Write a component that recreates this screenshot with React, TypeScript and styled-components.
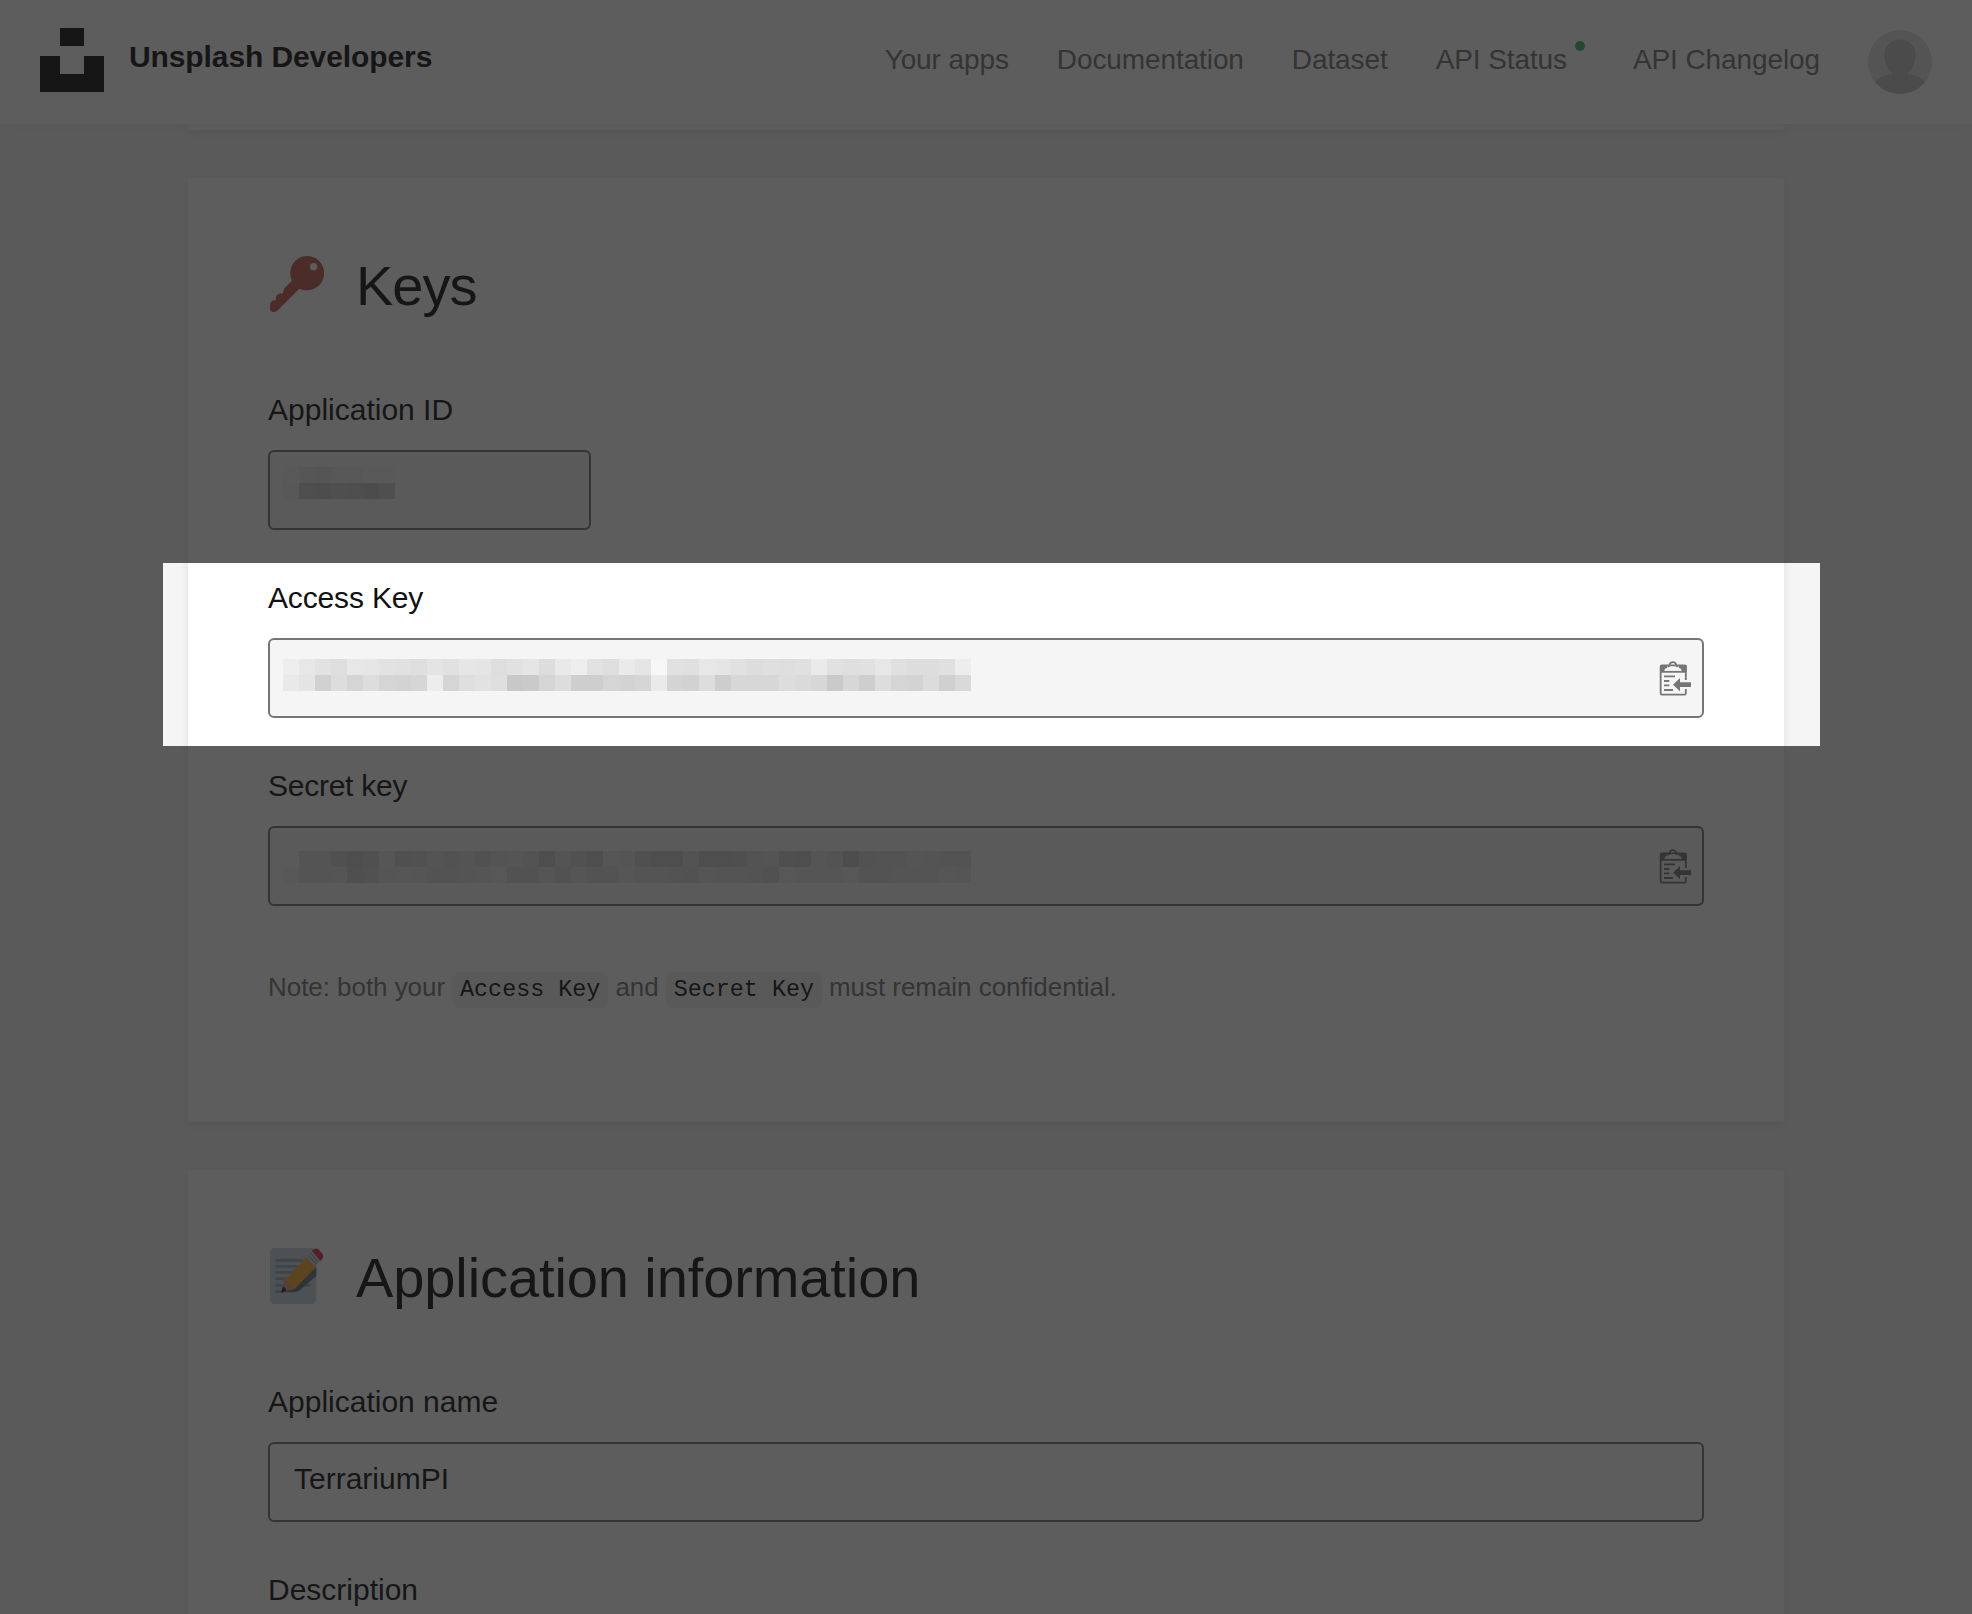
import React from "react";
import styled, { createGlobalStyle } from "styled-components";

const GlobalStyle = createGlobalStyle`
  *, *::before, *::after { box-sizing: border-box; }
  html, body { margin: 0; padding: 0; overflow: hidden; }
  body {
    background: #f5f5f5;
    color: #111;
    font-family: "Liberation Sans", Arial, Helvetica, sans-serif;
    font-size: 30px;
  }
`;

const Page = styled.div`
  position: relative;
  display: flex;
  flex-direction: column;
  width: 1972px;
  height: 1614px;
  overflow: hidden;
`;

const Header = styled.header`
  z-index: 1;
  flex: none;
  display: flex;
  align-items: flex-start;
  justify-content: space-between;
  height: 124px;
  padding: 28px 40px 0;
  background: #fff;
  box-shadow: 0 2px 8px rgba(0, 0, 0, 0.06);
`;

const Brand = styled.div`
  display: flex;
  gap: 25px;
  color: #111;
`;

const BrandName = styled.span`
  font-weight: 700;
  line-height: 34px;
  padding-top: 12px;
  letter-spacing: -0.1px;
`;

const Nav = styled.nav`
  display: flex;
  gap: 48px;
  padding-top: 2px;
`;

const NavLink = styled.a`
  display: flex;
  gap: 8px;
  padding-top: 14px;
  height: 64px;
  color: #767676;
  font-size: 28px;
  line-height: 32px;
  letter-spacing: -0.1px;
  white-space: nowrap;
`;

const StatusDot = styled.i`
  width: 10px;
  height: 10px;
  margin-top: -3px;
  border-radius: 50%;
  background: #3cb46e;
`;

const Main = styled.main`
  flex: none;
  display: flex;
  flex-direction: column;
  gap: 48px;
  width: 1596px;
  margin: 0 auto;
`;

const Card = styled.section<{ $height: number }>`
  height: ${(p) => p.$height}px;
  padding: 0 80px;
  background: #fff;
  border-radius: 2px;
  box-shadow: 0 3px 10px rgba(0, 0, 0, 0.09);
`;

const Heading = styled.h2<{ $tracking: string }>`
  display: flex;
  align-items: flex-start;
  gap: 32px;
  margin: 0;
  padding-top: 76px;
  font-size: 56px;
  font-weight: 400;
  line-height: 64px;
  letter-spacing: ${(p) => p.$tracking};
`;

const HeadingIcon = styled.svg`
  flex: none;
  width: 56px;
  height: 56px;
  margin-top: 2px;
`;

const Fields = styled.div`
  display: flex;
  flex-direction: column;
  gap: 42px;
  padding-top: 66px;
`;

const Field = styled.div`
  display: flex;
  flex-direction: column;
  gap: 14px;
`;

const Label = styled.label<{ $tracking?: string }>`
  line-height: 52px;
  height: 52px;
  letter-spacing: ${(p) => p.$tracking ?? "normal"};
`;

const InputBox = styled.div<{ $width: string; $filled?: boolean }>`
  display: flex;
  align-items: center;
  justify-content: space-between;
  width: ${(p) => p.$width};
  height: 80px;
  padding: 0 9px 0 13px;
  border: 2px solid #767676;
  border-radius: 6px;
  background: ${(p) => (p.$filled ? "#f5f5f5" : "#fff")};
`;

const InputValue = styled.span`
  padding: 0 0 6px 11px;
  line-height: 36px;
`;

const Mosaic = styled.div<{ $columns: number; $top: number }>`
  align-self: flex-start;
  display: grid;
  grid-template-columns: repeat(${(p) => p.$columns}, 16px);
  grid-auto-rows: 16px;
  margin-top: ${(p) => p.$top}px;
`;

const Tile = styled.i<{ $shade: string }>`
  background: ${(p) => `#${p.$shade}${p.$shade}${p.$shade}`};
`;

const Note = styled.p`
  display: flex;
  align-items: flex-start;
  gap: 7.5px;
  margin: 0;
  padding-top: 66px;
  color: #767676;
  font-size: 26px;
  line-height: 36px;
  letter-spacing: -0.05px;
`;

const NoteText = styled.span`
  margin-top: -3px;
`;

const Code = styled.code`
  padding: 0 7.5px;
  border-radius: 8px;
  background: #f0f0f0;
  color: #111;
  font-family: "Liberation Mono", "Courier New", monospace;
  font-size: 23.4px;
  line-height: 36px;
  height: 36px;
  letter-spacing: 0;
`;

const Spotlight = styled.div`
  position: absolute;
  z-index: 2;
  left: 163px;
  top: 563px;
  width: 1657px;
  height: 183px;
  box-shadow: 0 0 0 2000px rgba(24, 24, 25, 0.7);
`;

const APP_ID = ["f0 e6 e4 ea ea f0 f0", "ee cc c8 d0 ce c6 d0"];

const ACCESS_KEY = [
  "ee e7 e2 de e7 e6 e2 e1 de e4 e1 e6 e5 de e1 e5 dd e9 ee e2 de ea e5 f7 e1 e0 e7 e5 e1 dd df de e0 ea e1 df e1 e7 e0 dd dd e0 ed",
  "e9 e4 d1 dd d5 dd d5 d3 d6 ed d5 de e2 df c8 ca d5 dd ce ce d5 d3 d6 ea d4 d2 dd cd d7 d7 d7 dd da d7 ca d7 ce dd d5 d3 dc d0 d9",
];

const SECRET_KEY = [
  "f5 e2 e0 d4 ce d2 e8 d2 d6 e2 da e0 d6 e2 e4 dc cc e0 d6 ce e6 e4 d2 cc ce de cc cc cf de e2 d0 ce e3 dc ca da dc dd e3 e2 dc dc",
  "ee df df e3 cf d8 e3 e6 e4 dc dd e2 e4 ea da da e4 da e4 dc dc e8 e2 e2 dc da e5 e2 e2 dc d6 ea e4 e4 e4 ea de de e2 df e2 e8 e3",
];

function Redacted({ rows, top }: { rows: string[]; top: number }) {
  const shades = rows.join(" ").split(" ");
  return (
    <Mosaic $columns={shades.length / rows.length} $top={top}>
      {shades.map((shade, i) => (
        <Tile key={i} $shade={shade} />
      ))}
    </Mosaic>
  );
}

function Logo() {
  return (
    <svg width="64" height="64" viewBox="0 0 64 64" fill="currentColor" shapeRendering="crispEdges">
      <path d="M20 0h24v18H20zM0 28h20v18h24V28h20v36H0z" />
    </svg>
  );
}

function Avatar() {
  return (
    <svg width="64" height="64" viewBox="0 0 64 64">
      <defs>
        <clipPath id="avatar">
          <circle cx="32" cy="32" r="32" />
        </clipPath>
      </defs>
      <g clipPath="url(#avatar)">
        <rect width="64" height="64" fill="#dfdfdf" />
        <path
          d="M32 9.500c9 0 15.500 6 15.500 15.500 0 8-3 14-7.500 17.500v1.800c8 1 14 4 17 6.700V64H7V51c3-2.700 9-5.700 17-6.700v-1.800C19.500 39 16.500 33 16.500 25 16.500 15.500 23 9.500 32 9.500z"
          fill="#c4c4c4"
        />
      </g>
    </svg>
  );
}

function KeyIcon() {
  return (
    <HeadingIcon viewBox="-6 0 168 168">
      <path
        fillRule="evenodd"
        fill="#c45a4e"
        d="M111 0a51 51 0 0 1 0 103c-8 0-16-2-23-5L24 162c-6 7-15 8-21 3-4-4-4-10-2-15-2-8 2-14 8-17 1 0 5 1 7-1 2-3 1-7 3-12 3-6 10-9 17-7 5-2 4-9 7-16l23-23A51 51 0 0 1 111 0zM131 21a11 11 0 1 0 0 22 11 11 0 0 0 0-22z"
      />
    </HeadingIcon>
  );
}

function MemoIcon() {
  return (
    <HeadingIcon viewBox="-6 0 168 168">
      <rect width="139" height="168" rx="14" fill="#ccd6dd" />
      <path
        d="M20 37h75M20 55h60M20 73h50M20 92h35M20 112h25M80 112h38M20 131h20"
        stroke="#99aab5"
        strokeWidth="8"
        strokeLinecap="round"
      />
      <path d="M139 58v26L98 119c-9 9-17 13-30 14l-32-1z" fill="#66757f" />
      <path d="M42 99l68-73 30 28-66 69z" fill="#ffac33" />
      <path d="M42 98l8 1 8 8 6 7 10 9-12 3-27 7z" fill="#e39f78" />
      <path d="M39 115l9 8-1 6-9 4c-3 1-5-1-4-4z" fill="#292f33" />
      <path d="M109 28l16-18 26 26-17 19z" fill="#ccd6dd" />
      <path d="M115 22l25 27M121 15l25 27" stroke="#99aab5" strokeWidth="3.500" />
      <path d="M126 9c7-9 15-9 21-4l8 9c7 7 6 14-1 22l-3 3z" fill="#dd2e44" />
    </HeadingIcon>
  );
}

function ClipboardIcon() {
  return (
    <svg width="35" height="37" viewBox="0 0 105 111" fill="none" stroke="#767676" strokeWidth="5.500">
      <path d="M83.500 60V20q0-4-4-4H12q-4 0-4 4v80q0 4 4 4h67.500q4 0 4-4V87" />
      <path d="M8 35.500h75" />
      <path d="M6 15h24l-3 9c-6 1-8 4-8 11H6zM86 15H60l3 9c6 1 8 4 8 11h15z" fill="#767676" stroke="none" />
      <path d="M30 20c5-1 4-4 5-7 3-9 16-9 19 0 1 3 0 6 5 7" />
      <path d="M18 49h33M18 63h16M18 76h16M18 90h27" />
      <path d="M45 74l21-20v13h33v14H66v13z" fill="#767676" stroke="none" />
    </svg>
  );
}

export default function App() {
  return (
    <>
      <GlobalStyle />
      <Page>
        <Header>
          <Brand>
            <Logo />
            <BrandName>Unsplash Developers</BrandName>
          </Brand>
          <Nav>
            <NavLink>Your apps</NavLink>
            <NavLink>Documentation</NavLink>
            <NavLink>Dataset</NavLink>
            <NavLink>
              API Status
              <StatusDot />
            </NavLink>
            <NavLink>API Changelog</NavLink>
            <Avatar />
          </Nav>
        </Header>
        <Main>
          <Card $height={6} />
          <Card $height={944}>
            <Heading $tracking="-1px">
              <KeyIcon />
              Keys
            </Heading>
            <Fields>
              <Field>
                <Label>Application ID</Label>
                <InputBox $width="323px" $filled>
                  <Redacted rows={APP_ID} top={15} />
                </InputBox>
              </Field>
              <Field>
                <Label $tracking="-0.15px">Access Key</Label>
                <InputBox $width="100%" $filled>
                  <Redacted rows={ACCESS_KEY} top={19} />
                  <ClipboardIcon />
                </InputBox>
              </Field>
              <Field>
                <Label $tracking="-0.25px">Secret key</Label>
                <InputBox $width="100%" $filled>
                  <Redacted rows={SECRET_KEY} top={23} />
                  <ClipboardIcon />
                </InputBox>
              </Field>
            </Fields>
            <Note>
              <NoteText>Note: both your</NoteText>
              <Code>Access Key</Code>
              <NoteText>and</NoteText>
              <Code>Secret Key</Code>
              <NoteText>must remain confidential.</NoteText>
            </Note>
          </Card>
          <Card $height={600}>
            <Heading $tracking="-0.1px">
              <MemoIcon />
              Application information
            </Heading>
            <Fields>
              <Field>
                <Label>Application name</Label>
                <InputBox $width="100%">
                  <InputValue>TerrariumPI</InputValue>
                </InputBox>
              </Field>
              <Field>
                <Label>Description</Label>
              </Field>
            </Fields>
          </Card>
        </Main>
        <Spotlight />
      </Page>
    </>
  );
}
